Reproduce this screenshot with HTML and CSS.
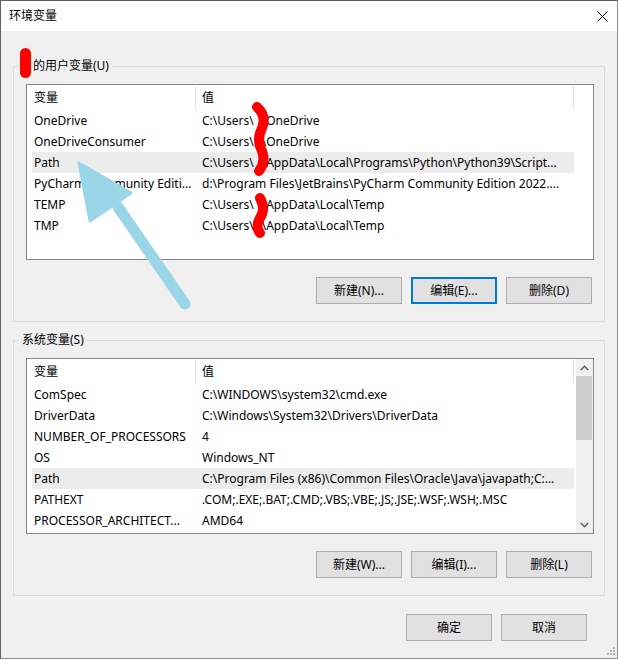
FILE: index.html
```html
<!DOCTYPE html>
<html lang="zh-CN">
<head>
<meta charset="utf-8">
<title>环境变量</title>
<link rel="stylesheet" href="styles.css">
</head>
<body>
<div class="window">
  <div class="titlebar">
    <span class="title">环境变量</span>
    <svg class="close" width="11" height="11" viewBox="0 0 11 11"><path d="M0.5 0.5 L10.5 10.5 M10.5 0.5 L0.5 10.5" stroke="#000" stroke-width="1" fill="none"/></svg>
  </div>
  <div class="content">
    <fieldset class="group">
      <legend class="legend legend-user">的用户变量(U)</legend>
      <div class="list">
        <div class="list-main">
          <div class="list-head"><div class="hc hc1">变量</div><div class="hc hc2">值</div></div>
          <div class="row"><span class="c1">OneDrive</span><span class="c2">C:\Users\<span class="gap"></span>\OneDrive</span></div>
          <div class="row"><span class="c1">OneDriveConsumer</span><span class="c2">C:\Users\<span class="gap"></span>\OneDrive</span></div>
          <div class="row selected"><span class="c1">Path</span><span class="c2">C:\Users\<span class="gap"></span>\AppData\Local\Programs\Python\Python39\Script...</span></div>
          <div class="row"><span class="c1">PyCharm Community Editi...</span><span class="c2">d:\Program Files\JetBrains\PyCharm Community Edition 2022....</span></div>
          <div class="row"><span class="c1">TEMP</span><span class="c2">C:\Users\<span class="gap"></span>\AppData\Local\Temp</span></div>
          <div class="row"><span class="c1">TMP</span><span class="c2">C:\Users\<span class="gap"></span>\AppData\Local\Temp</span></div>
        </div>
      </div>
      <div class="buttons">
        <button class="btn">新建(N)...</button>
        <button class="btn focused">编辑(E)...</button>
        <button class="btn">删除(D)</button>
      </div>
    </fieldset>

    <fieldset class="group group-sys">
      <legend class="legend">系统变量(S)</legend>
      <div class="list">
        <div class="list-main">
          <div class="list-head"><div class="hc hc1">变量</div><div class="hc hc2">值</div></div>
          <div class="row"><span class="c1">ComSpec</span><span class="c2">C:\WINDOWS\system32\cmd.exe</span></div>
          <div class="row"><span class="c1">DriverData</span><span class="c2">C:\Windows\System32\Drivers\DriverData</span></div>
          <div class="row"><span class="c1">NUMBER_OF_PROCESSORS</span><span class="c2">4</span></div>
          <div class="row"><span class="c1">OS</span><span class="c2">Windows_NT</span></div>
          <div class="row selected"><span class="c1">Path</span><span class="c2">C:\Program Files (x86)\Common Files\Oracle\Java\javapath;C:...</span></div>
          <div class="row"><span class="c1">PATHEXT</span><span class="c2">.COM;.EXE;.BAT;.CMD;.VBS;.VBE;.JS;.JSE;.WSF;.WSH;.MSC</span></div>
          <div class="row"><span class="c1">PROCESSOR_ARCHITECT...</span><span class="c2">AMD64</span></div>
        </div>
        <div class="scrollbar">
          <div class="arrow"><svg width="9" height="6" viewBox="0 0 9 6"><path d="M0.8 5 L4.5 1.3 L8.2 5" stroke="#606060" stroke-width="1.6" fill="none"/></svg></div>
          <div class="track"><div class="thumb"></div></div>
          <div class="arrow"><svg width="9" height="6" viewBox="0 0 9 6"><path d="M0.8 1 L4.5 4.7 L8.2 1" stroke="#606060" stroke-width="1.6" fill="none"/></svg></div>
        </div>
      </div>
      <div class="buttons">
        <button class="btn">新建(W)...</button>
        <button class="btn">编辑(I)...</button>
        <button class="btn">删除(L)</button>
      </div>
    </fieldset>

    <div class="dialog-buttons">
      <button class="btn">确定</button>
      <button class="btn">取消</button>
    </div>
  </div>

  <svg class="grip" width="8" height="8" viewBox="0 0 8 8">
    <rect x="6" y="0" width="2" height="2" fill="#b0b0b0"/>
    <rect x="3" y="3" width="2" height="2" fill="#b0b0b0"/>
    <rect x="6" y="3" width="2" height="2" fill="#b0b0b0"/>
    <rect x="0" y="6" width="2" height="2" fill="#b0b0b0"/>
    <rect x="3" y="6" width="2" height="2" fill="#b0b0b0"/>
    <rect x="6" y="6" width="2" height="2" fill="#b0b0b0"/>
  </svg>

  <svg class="annot" width="618" height="659" viewBox="0 0 618 659">
    <rect x="20" y="48" width="11" height="30" rx="5.5" fill="#ff0000"/>
    <path d="M257 107 Q267 116 262 128 Q256 140 262 151 Q266 162 259 171" stroke="#ff0000" stroke-width="10" fill="none" stroke-linecap="round"/>
    <path d="M260 198 Q266 209 260 218 Q255 227 260 233" stroke="#ff0000" stroke-width="10" fill="none" stroke-linecap="round"/>
    <path d="M185 304 L118 207" stroke="#9ad6e7" stroke-width="11" fill="none" stroke-linecap="round"/>
    <path d="M79 163 L90 221 L131 193 Z" fill="#9ad6e7" stroke="#9ad6e7" stroke-width="3" stroke-linejoin="round"/>
  </svg>
</div>
</body>
</html>
```

FILE: styles.css
```css
* { box-sizing: border-box; }

html, body {
  margin: 0;
  padding: 0;
  background: #f0f0f0;
}

body {
  font-family: "Noto Sans", "Noto Sans CJK SC", sans-serif;
  font-size: 12px;
  color: #000;
}

.window {
  position: relative;
  width: 618px;
  height: 659px;
  background: #f0f0f0;
  border: 1px solid #5f5f5f;
  border-right-color: #8a8a8a;
  border-bottom-color: #8a8a8a;
}

.titlebar {
  height: 30px;
  background: #fff;
  display: flex;
  align-items: center;
  justify-content: space-between;
  padding-left: 8px;
  padding-right: 9px;
}

.title {
  font-size: 12px;
  line-height: 16px;
}

.close { display: block; }

.content {
  padding: 27px 12px 0 12px;
}

.group {
  margin: 0;
  padding: 10px 10px 17px 12px;
  border: 1px solid #dcdcdc;
  min-width: 0;
}

.group-sys { margin-top: 10px; }

.legend {
  font-size: 12px;
  line-height: 16px;
  padding: 0 3px;
  margin-left: -7px;
}

.legend-user { padding-left: 14px; }

.list {
  height: 176px;
  border: 1px solid #868686;
  background: #fff;
  display: flex;
  overflow: hidden;
}

.list-main {
  flex: 1;
  min-width: 0;
}

.list-head {
  display: flex;
  height: 25px;
  align-items: stretch;
}

.hc {
  border-right: 1px solid #e5e5e5;
  margin: 1px 0 1px 0;
  line-height: 23px;
}

.hc1 {
  width: 169px;
  padding-left: 7px;
}

.hc2 {
  width: 378px;
  padding-left: 6px;
}

.row {
  display: flex;
  height: 21px;
  line-height: 21px;
  margin-left: 5px;
  width: 542px;
  white-space: nowrap;
}

.row.selected { background: #ececec; }

.c1 {
  width: 163px;
  padding-left: 2px;
  overflow: hidden;
}

.c2 {
  flex: 1;
  padding-left: 7px;
  overflow: hidden;
}

.gap {
  display: inline-block;
  width: 8px;
}

.scrollbar {
  width: 17px;
  background: #f0f0f0;
  display: flex;
  flex-direction: column;
}

.arrow {
  height: 17px;
  display: flex;
  align-items: center;
  justify-content: center;
}

.arrow svg { display: block; }

.track {
  flex: 1;
  padding: 0 1px 0 0;
}

.thumb {
  height: 64px;
  background: #cdcdcd;
}

.buttons {
  display: flex;
  justify-content: flex-end;
  gap: 9px;
  margin-top: 17px;
  padding-right: 2px;
}

.btn {
  width: 86px;
  height: 27px;
  background: #e1e1e1;
  border: 1px solid #adadad;
  font-family: "Noto Sans", "Noto Sans CJK SC", sans-serif;
  font-size: 12px;
  color: #000;
  padding: 0;
  margin: 0;
  line-height: 25px;
}

.btn.focused {
  border: 2px solid #0078d7;
  line-height: 23px;
}

.dialog-buttons {
  display: flex;
  justify-content: flex-end;
  gap: 9px;
  margin-top: 18px;
  padding-right: 18px;
}

.grip {
  position: absolute;
  right: 2px;
  bottom: 3px;
}

.annot {
  position: absolute;
  left: -1px;
  top: -1px;
  pointer-events: none;
}
```
